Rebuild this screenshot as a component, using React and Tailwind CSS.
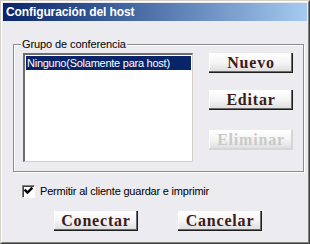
import React from "react";

const sans = { fontFamily: '"Liberation Sans", Arial, sans-serif' };

// Bevelled dialog button with serif bold caption
const DlgButton = ({ children, disabled, className = "" }) => (
  <button
    className={
      "w-[84px] h-[20px] flex items-center justify-center font-bold text-[16px] leading-none tracking-[0.8px] bg-gradient-to-b from-white via-[#f4f4f4] to-[#dadada] " +
      (disabled
        ? "text-[#c9c9c9] shadow-[inset_-2px_-2px_0_#d6d6d6,inset_1px_1px_0_#ffffff] "
        : "text-[#3b1b1b] shadow-[inset_-1px_-1px_0_#1e1e1e,inset_-2px_-2px_0_#6a6a6a,inset_1px_1px_0_#ffffff] ") +
      className
    }
    style={{ fontFamily: '"Liberation Serif", "Times New Roman", serif' }}
  >
    {children}
  </button>
);

export default function App() {
  return (
    <div className="w-[310px] h-[244px] border border-t-[#d4d0c8] border-l-[#d4d0c8] border-r-[#404040] border-b-[#404040]">
      <div className="w-full h-full border border-t-white border-l-white border-r-[#808080] border-b-[#808080] bg-[#ecebef] p-[1px] flex flex-col">
        {/* title bar */}
        <div className="h-[18px] bg-gradient-to-r from-[#0a246a] to-[#a6caf0] flex items-center pl-[3px]">
          <span className="text-white font-bold text-[12px] tracking-[-0.1px]" style={sans}>
            Configuración del host
          </span>
        </div>

        {/* group box */}
        <div className="relative ml-[10px] mt-[23px] w-[291px] border border-[#8c8c8c] shadow-[inset_1px_1px_0_#ffffff,1px_1px_0_#ffffff] pl-[9px] pt-[8px] pb-[9px] flex">
          <span
            className="absolute -top-[8px] left-[7px] px-[1px] bg-[#ecebef] text-[11px] leading-[14px] text-black tracking-[-0.1px]"
            style={sans}
          >
            Grupo de conferencia
          </span>
          <div className="w-[170px] h-[109px] bg-white border-t-2 border-l-2 border-[#6e6e6e] border-r border-b border-r-[#d4d0c8] border-b-[#d4d0c8] pt-[1px] pl-[1px]">
            <div
              className="h-[14px] mr-[1px] bg-[#0a246a] text-white text-[11px] leading-[14px] pl-[1px] tracking-[-0.25px]"
              style={sans}
            >
              Ninguno(Solamente para host)
            </div>
          </div>
          <div className="ml-[16px] flex flex-col">
            <DlgButton>Nuevo</DlgButton>
            <DlgButton className="mt-[17px]">Editar</DlgButton>
            <DlgButton disabled className="mt-[20px]">Eliminar</DlgButton>
          </div>
        </div>

        {/* checkbox */}
        <div className="flex items-center ml-[19px] mt-[11px]">
          <div className="w-[13px] h-[13px] bg-white border-t border-l border-[#808080] border-r border-b border-r-white border-b-white shadow-[inset_1px_1px_0_#404040] flex items-center justify-center">
            <svg width="9" height="9" viewBox="0 0 9 9">
              <path d="M1.5 3.5 L3.5 5.5 L7.5 1.5" stroke="#000" strokeWidth="2.4" fill="none" strokeLinecap="square" />
            </svg>
          </div>
          <span className="ml-[5px] text-[11px] text-black tracking-[-0.2px]" style={sans}>
            Permitir al cliente guardar e imprimir
          </span>
        </div>

        {/* bottom buttons */}
        <div className="flex ml-[51px] mt-[11px] gap-[40px]">
          <DlgButton>Conectar</DlgButton>
          <DlgButton>Cancelar</DlgButton>
        </div>
      </div>
    </div>
  );
}
